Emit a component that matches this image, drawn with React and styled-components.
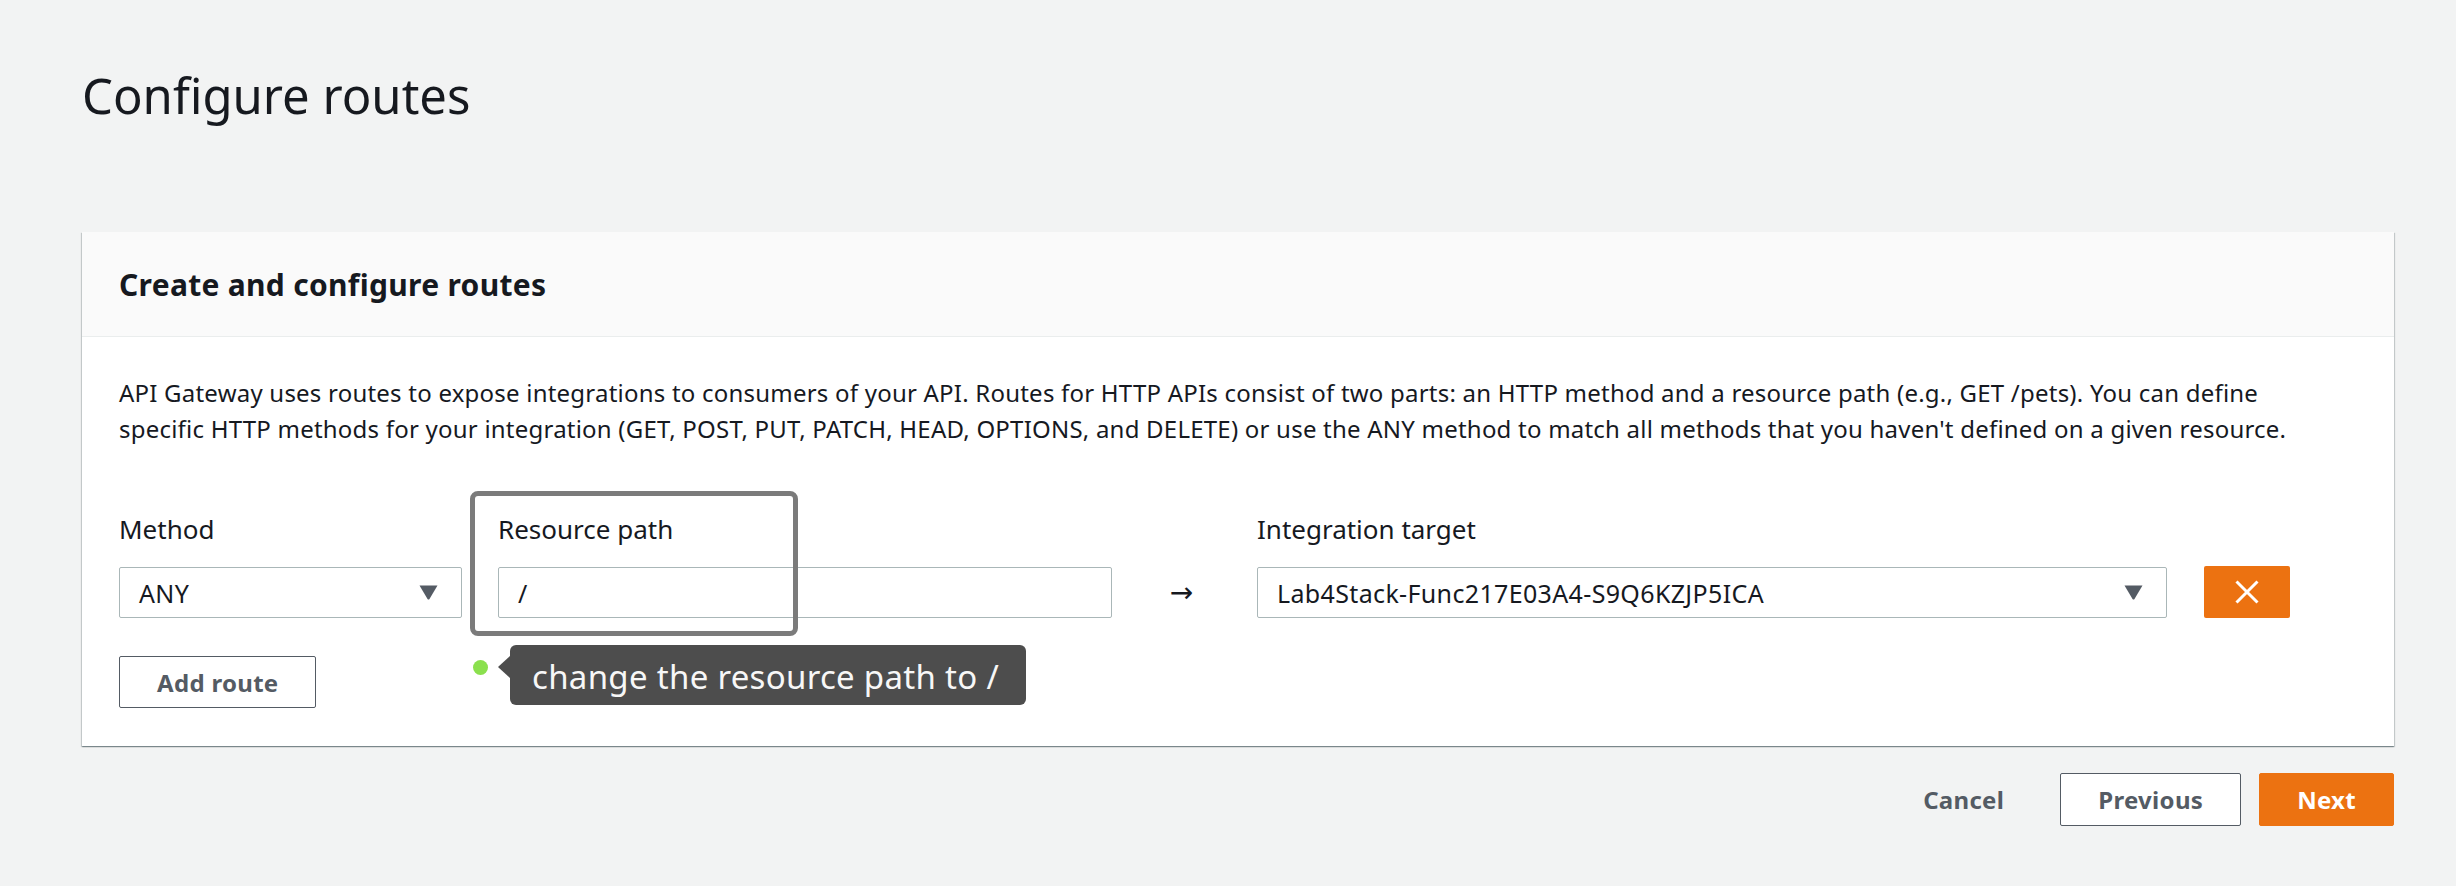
import React from "react";
import styled, { createGlobalStyle } from "styled-components";

const GlobalStyle = createGlobalStyle`
  html, body {
    margin: 0;
    padding: 0;
    background: #f2f3f3;
  }
  body {
    font-family: "Noto Sans", "Open Sans", sans-serif;
    color: #16191f;
  }
`;

const Page = styled.div`
  min-height: 886px;
  padding: 65px 62px 0 82px;
  box-sizing: border-box;
`;

const Title = styled.h1`
  margin: 0 0 107px 0;
  font-size: 49px;
  line-height: 60px;
  font-weight: 400;
`;

const Card = styled.section`
  background: #fff;
  box-shadow: 0 1px 1px 0 rgba(0, 28, 36, 0.3),
    1px 1px 1px 0 rgba(0, 28, 36, 0.15), -1px 1px 1px 0 rgba(0, 28, 36, 0.15);
`;

const CardHeader = styled.div`
  background: #fafafa;
  border-bottom: 1px solid #eaeded;
  padding: 33px 37px 31px;
`;

const CardTitle = styled.h2`
  margin: 0;
  font-size: 30px;
  line-height: 40px;
  font-weight: 700;
  letter-spacing: 0.3px;
`;

const CardBody = styled.div`
  padding: 38px 37px 38px;
`;

const Intro = styled.p`
  margin: 0;
  font-size: 24px;
  line-height: 36px;
  letter-spacing: 0.22px;
  white-space: nowrap;
`;

const RouteRow = styled.div`
  display: flex;
  align-items: flex-end;
  margin-top: 65px;
`;

const Field = styled.div`
  position: relative;
  width: ${(p) => p.w}px;
  margin-right: ${(p) => p.gap || 0}px;
  display: flex;
  flex-direction: column;
`;

const Label = styled.label`
  font-size: 26px;
  line-height: 34px;
  margin-bottom: 21px;
`;

const Control = styled.div`
  height: 51px;
  box-sizing: border-box;
  border: 1px solid #aab7b8;
  border-radius: 2px;
  background: #fff;
  display: flex;
  align-items: center;
  justify-content: space-between;
  padding: 0 23px 0 19px;
  font-size: 25px;
  letter-spacing: 0.35px;
`;

const Caret = () => (
  <svg width="19" height="15" viewBox="0 0 19 15">
    <path d="M0.5 0.5 H18.5 L10.5 14 Q9.5 15.2 8.5 14 Z" fill="#545b64" />
  </svg>
);

const ArrowCell = styled.div`
  width: 145px;
  height: 51px;
  display: flex;
  align-items: center;
  justify-content: center;
  font-family: "DejaVu Sans", sans-serif;
  font-size: 28px;
  padding-right: 6px;
  box-sizing: border-box;
`;

const RemoveButton = styled.button`
  width: 86px;
  height: 52px;
  margin-left: 37px;
  border: none;
  border-radius: 2px;
  background: #ec7211;
  display: flex;
  align-items: center;
  justify-content: center;
  padding: 0;
`;

const Highlight = styled.div`
  position: absolute;
  left: -28px;
  top: -21px;
  width: 328px;
  height: 145px;
  box-sizing: border-box;
  border: 5px solid #7b7b7b;
  border-radius: 8px;
  pointer-events: none;
`;

const Dot = styled.span`
  position: absolute;
  left: -25px;
  top: 148px;
  width: 15px;
  height: 15px;
  border-radius: 50%;
  background: #8be04e;
`;

const Tip = styled.div`
  position: absolute;
  left: 12px;
  top: 133px;
  height: 60px;
  box-sizing: border-box;
  padding: 3px 27px 0 22px;
  background: #4d4d4d;
  color: #f7f7f7;
  border-radius: 6px;
  font-size: 33px;
  line-height: 57px;
  letter-spacing: 0.3px;
  white-space: nowrap;

  &::before {
    content: "";
    position: absolute;
    left: -12px;
    top: 11px;
    border-style: solid;
    border-width: 11px 12px 11px 0;
    border-color: transparent #4d4d4d transparent transparent;
  }
`;

const Button = styled.button`
  height: ${(p) => p.h || 53}px;
  box-sizing: border-box;
  padding: 0 37px;
  border-radius: 2px;
  font-family: "Noto Sans", sans-serif;
  font-size: 24px;
  font-weight: 700;
  letter-spacing: 0.3px;
  cursor: pointer;
  color: ${(p) => (p.primary ? "#fff" : "#545b64")};
  background: ${(p) => (p.primary ? "#ec7211" : p.plain ? "transparent" : "#fff")};
  border: 1px solid
    ${(p) => (p.primary ? "#ec7211" : p.plain ? "transparent" : "#545b64")};
`;

const AddRow = styled.div`
  margin-top: 38px;
  display: flex;
`;

const Footer = styled.div`
  display: flex;
  justify-content: flex-end;
  gap: 18px;
  margin-top: 27px;
`;

export default function App() {
  return (
    <>
      <GlobalStyle />
      <Page>
        <Title>Configure routes</Title>
        <Card>
          <CardHeader>
            <CardTitle>Create and configure routes</CardTitle>
          </CardHeader>
          <CardBody>
            <Intro>
              API Gateway uses routes to expose integrations to consumers of your API. Routes for HTTP APIs consist of two parts: an HTTP method and a resource path (e.g., GET /pets). You can define
              <br />
              specific HTTP methods for your integration (GET, POST, PUT, PATCH, HEAD, OPTIONS, and DELETE) or use the ANY method to match all methods that you haven't defined on a given resource.
            </Intro>
            <RouteRow>
              <Field w={343} gap={36}>
                <Label>Method</Label>
                <Control>
                  <span>ANY</span>
                  <Caret />
                </Control>
              </Field>
              <Field w={614}>
                <Label>Resource path</Label>
                <Control>
                  <span>/</span>
                </Control>
                <Highlight />
                <Dot />
                <Tip>change the resource path to /</Tip>
              </Field>
              <ArrowCell>→</ArrowCell>
              <Field w={910}>
                <Label>Integration target</Label>
                <Control>
                  <span>Lab4Stack-Func217E03A4-S9Q6KZJP5ICA</span>
                  <Caret />
                </Control>
              </Field>
              <RemoveButton aria-label="Remove route">
                <svg width="24" height="24" viewBox="0 0 24 24">
                  <path d="M1.5 1.5 L22.5 22.5 M22.5 1.5 L1.5 22.5" stroke="#fff" strokeWidth="3" />
                </svg>
              </RemoveButton>
            </RouteRow>
            <AddRow>
              <Button h={52}>Add route</Button>
            </AddRow>
          </CardBody>
        </Card>
        <Footer>
          <Button plain>Cancel</Button>
          <Button>Previous</Button>
          <Button primary>Next</Button>
        </Footer>
      </Page>
    </>
  );
}
